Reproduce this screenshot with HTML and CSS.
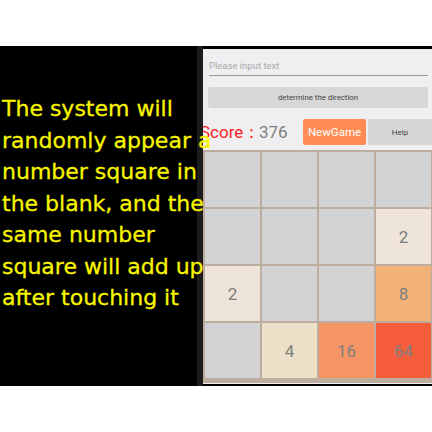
FILE: index.html
```html
<!DOCTYPE html>
<html>
<head>
<meta charset="utf-8">
<link rel="stylesheet" href="styles.css">
</head>
<body>
<div class="top"></div>
<div class="stage">
  <div class="caption">The system will<br>randomly appear a<br>number square in<br>the blank, and the<br>same number<br>square will add up<br>after touching it</div>
  <div class="bezel"></div>
  <div class="phone">
    <div class="field"><span>Please input text</span></div>
    <div class="dir-btn">determine the direction</div>
    <div class="score-row">
      <div class="score-label">Score：</div>
      <div class="score-val">376</div>
      <div class="btn-new">NewGame</div>
      <div class="btn-help">Help</div>
    </div>
    <div class="board">
      <div class="cell"></div><div class="cell"></div><div class="cell"></div><div class="cell"></div>
      <div class="cell"></div><div class="cell"></div><div class="cell"></div><div class="cell t2">2</div>
      <div class="cell t2">2</div><div class="cell"></div><div class="cell"></div><div class="cell t8">8</div>
      <div class="cell"></div><div class="cell t4">4</div><div class="cell t16">16</div><div class="cell t64">64</div>
    </div>
  </div>
</div>
</body>
</html>
```
FILE: styles.css
```css
html, body { margin: 0; padding: 0; background: #fff; }
body { width: 432px; height: 432px; overflow: hidden; font-family: Roboto, "Liberation Sans", sans-serif; }
.top { height: 46px; }
.stage { display: flex; height: 340px; background: #000; }
.caption {
  width: 197px; flex: none; position: relative; z-index: 2;
  padding: 47px 0 0 2px; box-sizing: border-box;
  color: #f7f500; font-family: "DejaVu Sans", sans-serif; font-size: 22px; line-height: 31.5px;
  -webkit-text-stroke: 0.3px #f7f500;
  white-space: nowrap;
}
.bezel { width: 6px; flex: none; background: #1c1c1c; }
.phone {
  flex: 1; margin: 3px 0 2px 0; background: #efeff1; overflow: hidden;
  display: flex; flex-direction: column;
}
.field {
  height: 27px; margin: 0 4px 0 6px; border-bottom: 1px solid #9a9a9a;
  display: flex; align-items: flex-end; padding-bottom: 4px; box-sizing: border-box;
  color: #a9a9a9; font-size: 9.5px;
}
.field span { padding-left: 0; }
.dir-btn {
  margin: 11px 4px 0 5px; height: 21px; background: #d7d7d7; border-radius: 3px;
  display: flex; align-items: center; justify-content: center;
  font-size: 7.8px; color: #444;
}
.score-row { display: flex; align-items: center; height: 26px; margin-top: 11px; }
.score-label { color: #ff2424; font-size: 17px; margin-left: -3px; width: 59px; white-space: nowrap; }
.score-val { color: #808080; font-size: 17px; width: 44px; }
.btn-new {
  width: 63px; height: 26px; background: #ff8b55; border-radius: 2px; color: #fff; font-size: 11.5px;
  display: flex; align-items: center; justify-content: center;
}
.btn-help {
  flex: 1; margin-left: 2px; height: 26px; background: #d6d6d6; border-radius: 2px 0 0 2px;
  color: #444; font-size: 8px; display: flex; align-items: center; justify-content: center;
}
.board {
  margin-top: 5px; background: #bcad9f; padding: 2px 1px 5px 2px;
  display: grid; grid-template-columns: repeat(4, 1fr); grid-template-rows: repeat(4, 55px); gap: 2px;
}
.cell {
  background: #d3d3d5; display: flex; align-items: center; justify-content: center;
  color: #7e7e7e; font-size: 17px;
}
.t2 { background: #eee4da; }
.t4 { background: #ede0c8; }
.t8 { background: #f2b179; }
.t16 { background: #f59563; }
.t64 { background: #f65e3b; }
```
